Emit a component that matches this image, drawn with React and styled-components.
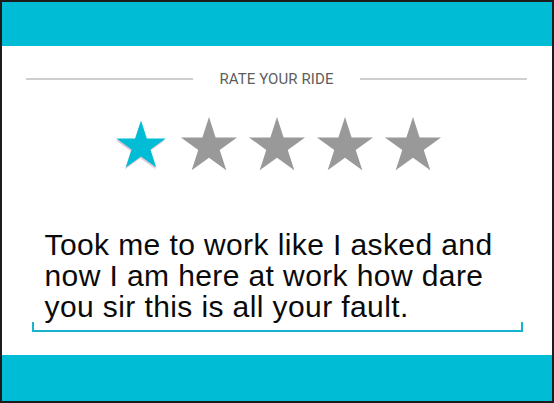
import React from "react";
import styled, { createGlobalStyle } from "styled-components";

const GlobalStyle = createGlobalStyle`
  body {
    margin: 0;
  }
  * {
    box-sizing: border-box;
  }
`;

const Frame = styled.div`
  width: 554px;
  height: 403px;
  border: 2px solid #1c1c1c;
  background: #fff;
  display: flex;
  flex-direction: column;
`;

const Band = styled.div`
  height: ${(p) => p.$h}px;
  background: #00bcd4;
  flex-shrink: 0;
`;

const Content = styled.div`
  flex: 1;
  display: flex;
  flex-direction: column;
  align-items: center;
  padding-top: 23px;
`;

const TitleRow = styled.div`
  align-self: stretch;
  display: flex;
  align-items: center;
  padding: 0 25px 0 24px;
`;

const Rule = styled.div`
  flex: 1;
  height: 2px;
  background: #cfcfcf;
`;

const Title = styled.h2`
  margin: 0 26px;
  font-family: Roboto, "Liberation Sans", sans-serif;
  font-size: 15px;
  font-weight: 400;
  line-height: 20px;
  color: #5e5e5e;
  letter-spacing: 0.1px;
`;

const StarRow = styled.div`
  display: flex;
  gap: 8px;
  margin-top: 27px;
`;

const StarSvg = styled.svg`
  width: 60px;
  height: 56px;
  display: block;
`;

const Review = styled.div`
  width: 491px;
  margin-top: 57px;
`;

const ReviewText = styled.p`
  margin: 0;
  padding: 0 13px;
  font-family: "Liberation Sans", Arial, sans-serif;
  font-size: 30px;
  line-height: 31px;
  letter-spacing: 0.4px;
  color: #0a0a0a;
`;

const Underline = styled.div`
  height: 10px;
  border: 2px solid #17b3cc;
  border-top: none;
`;

// five-point star outline around (cx, cy)
function starPoints(cx, cy, R) {
  const r = R * 0.382;
  const pts = [];
  for (let i = 0; i < 10; i++) {
    const rad = i % 2 === 0 ? R : r;
    const a = -Math.PI / 2 + (i * Math.PI) / 5;
    pts.push(`${(cx + rad * Math.cos(a)).toFixed(2)},${(cy + rad * Math.sin(a)).toFixed(2)}`);
  }
  return pts.join(" ");
}

function Star({ filled }) {
  if (filled) {
    return (
      <StarSvg viewBox="0 0 60 56">
        <polygon points={starPoints(29.3, 32.3, 26)} fill="#e2c9d8" />
        <polygon points={starPoints(30, 30.5, 26)} fill="#00bcd4" />
      </StarSvg>
    );
  }
  return (
    <StarSvg viewBox="0 0 60 56" style={{ filter: "blur(0.5px)" }}>
      <polygon points={starPoints(30, 30.5, 29.5)} fill="#999" />
    </StarSvg>
  );
}

const rating = 1;

export default function App() {
  return (
    <>
      <GlobalStyle />
      <Frame>
        <Band $h={44} />
        <Content>
          <TitleRow>
            <Rule />
            <Title>RATE YOUR RIDE</Title>
            <Rule />
          </TitleRow>
          <StarRow>
            {[1, 2, 3, 4, 5].map((n) => (
              <Star key={n} filled={n <= rating} />
            ))}
          </StarRow>
          <Review>
            <ReviewText>
              Took me to work like I asked and now I am here at work how dare you sir this is all your fault.
            </ReviewText>
            <Underline />
          </Review>
        </Content>
        <Band $h={46} />
      </Frame>
    </>
  );
}
